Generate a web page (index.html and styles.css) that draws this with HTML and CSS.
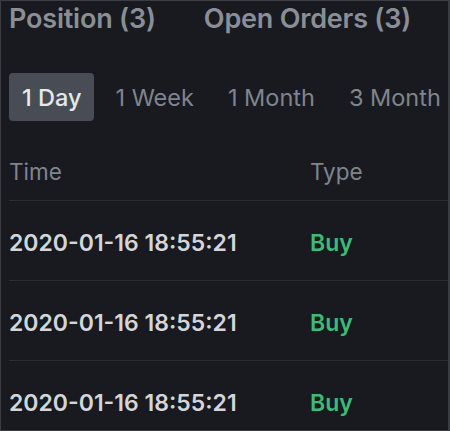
FILE: index.html
```html
<!DOCTYPE html>
<html>
<head>
<meta charset="utf-8">
<link rel="stylesheet" href="styles.css">
</head>
<body>
<div class="panel">
  <div class="tabs">
    <div class="tab">Position (3)</div>
    <div class="tab">Open Orders (3)</div>
  </div>
  <div class="periods">
    <div class="period active">1 Day</div>
    <div class="period">1 Week</div>
    <div class="period">1 Month</div>
    <div class="period">3 Month</div>
  </div>
  <div class="thead">
    <div class="c-time">Time</div>
    <div class="c-type">Type</div>
  </div>
  <div class="row">
    <div class="c-time">2020-01-16 18:55:21</div>
    <div class="c-type buy">Buy</div>
  </div>
  <div class="row">
    <div class="c-time">2020-01-16 18:55:21</div>
    <div class="c-type buy">Buy</div>
  </div>
  <div class="row">
    <div class="c-time">2020-01-16 18:55:21</div>
    <div class="c-type buy">Buy</div>
  </div>
</div>
</body>
</html>
```
FILE: styles.css
```css
html, body {
  margin: 0;
  padding: 0;
  background: #181a20;
}
.panel {
  box-sizing: border-box;
  width: 450px;
  height: 431px;
  overflow: hidden;
  background: #181a20;
  border: 1px solid #3a3d43;
  border-right-width: 2px;
  font-family: Inter, "Noto Sans", sans-serif;
  color: #848e9c;
}
.tabs {
  display: flex;
  gap: 48px;
  padding-left: 8px;
  height: 34px;
  align-items: center;
}
.tab {
  font-size: 27px;
  font-weight: 600;
  color: #8a8f97;
  letter-spacing: -0.2px;
}
.periods {
  display: flex;
  align-items: center;
  margin-top: 38px;
  padding-left: 8px;
}
.period {
  height: 48px;
  display: flex;
  align-items: center;
  padding: 0 13px;
  font-size: 23.5px;
  color: #7f858e;
  border-radius: 4px;
  margin-right: 8px;
  white-space: nowrap;
}
.period.active {
  background: #474c55;
  color: #e6e8ea;
  font-weight: 500;
}
.thead {
  display: flex;
  align-items: center;
  box-sizing: border-box;
  height: 80px;
  padding-top: 22px;
  margin-left: 8px;
  border-bottom: 1px solid #2a2d33;
  font-size: 22.5px;
  color: #7f858e;
}
.row {
  display: flex;
  align-items: center;
  height: 80px;
  margin-left: 8px;
  padding-top: 4px;
  box-sizing: border-box;
  border-bottom: 1px solid #2a2d33;
  font-size: 23px;
  font-weight: 600;
  color: #d3d5d9;
}
.row:last-child {
  border-bottom: none;
}
.c-time {
  width: 301px;
  white-space: nowrap;
}
.buy {
  color: #3dbb76;
}
```
